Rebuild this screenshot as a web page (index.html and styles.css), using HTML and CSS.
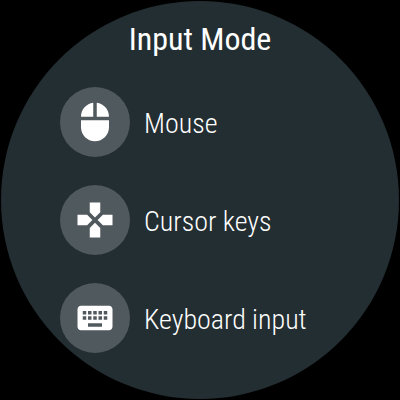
FILE: index.html
```
<!DOCTYPE html>
<html lang="en">
<head>
  <meta charset="UTF-8">
  <meta name="viewport" content="width=device-width, initial-scale=1">
  <title>Input Mode</title>
  <link rel="stylesheet" href="styles.css">
</head>
<body>
  <main class="watch">
    <h1>Input Mode</h1>
    <div class="modes">
      <button type="button" class="mode">
        <span class="icon">
          <svg viewBox="0 0 24 24" aria-hidden="true">
            <path d="M13 1.07V9h7c0-4.08-3.05-7.44-7-7.93zM4 15c0 4.42 3.58 8 8 8s8-3.58 8-8v-4H4v4zm7-13.93C7.05 1.56 4 4.92 4 9h7V1.07z"/>
          </svg>
        </span>
        <span class="label">Mouse</span>
      </button>
      <button type="button" class="mode">
        <span class="icon">
          <svg viewBox="0 0 24 24" aria-hidden="true">
            <path d="M15 7.5V2H9v5.5l3 3 3-3zM7.5 9H2v6h5.5l3-3-3-3zM9 16.5V22h6v-5.5l-3-3-3 3zM16.5 9l-3 3 3 3H22V9h-5.5z"/>
          </svg>
        </span>
        <span class="label">Cursor keys</span>
      </button>
      <button type="button" class="mode">
        <span class="icon">
          <svg viewBox="0 0 24 24" aria-hidden="true">
            <path d="M20 5H4c-1.1 0-1.99.9-1.99 2L2 17c0 1.1.9 2 2 2h16c1.1 0 2-.9 2-2V7c0-1.1-.9-2-2-2zm-9 3h2v2h-2V8zm0 3h2v2h-2v-2zM8 8h2v2H8V8zm0 3h2v2H8v-2zm-1 2H5v-2h2v2zm0-3H5V8h2v2zm9 7H8v-2h8v2zm0-4h-2v-2h2v2zm0-3h-2V8h2v2zm3 3h-2v-2h2v2zm0-3h-2V8h2v2z"/>
          </svg>
        </span>
        <span class="label">Keyboard input</span>
      </button>
    </div>
  </main>
</body>
</html>
```
FILE: styles.css
```
body {
  margin: 0;
  padding: 1px;
  background: #000;
  color: #fff;
  font-family: "Roboto Condensed", "Liberation Sans Narrow", Roboto, sans-serif;
}

.watch {
  box-sizing: border-box;
  aspect-ratio: 1;
  max-width: calc(100vh - 2px);
  margin: 0 auto;
  padding-top: 18px;
  border-radius: 50%;
  background: #232e32;
}

h1 {
  margin: 0 0 28px;
  font-size: 32px;
  font-weight: 400;
  line-height: 40px;
  text-align: center;
}

.modes {
  display: flex;
  flex-direction: column;
  gap: 28px;
  padding-left: 59px;
}

.mode {
  display: flex;
  align-items: center;
  gap: 14px;
  padding: 0;
  border: none;
  background: none;
  color: inherit;
  font-family: inherit;
  font-size: 28px;
  font-weight: 300;
  line-height: 36px;
  text-align: left;
  white-space: nowrap;
  cursor: pointer;
}

.icon {
  display: flex;
  align-items: center;
  justify-content: center;
  width: 70px;
  height: 70px;
  border-radius: 50%;
  background: #50595e;
}

.icon svg {
  width: 42px;
  height: 42px;
  fill: #fff;
}

.label {
  padding-top: 4px;
}
```
